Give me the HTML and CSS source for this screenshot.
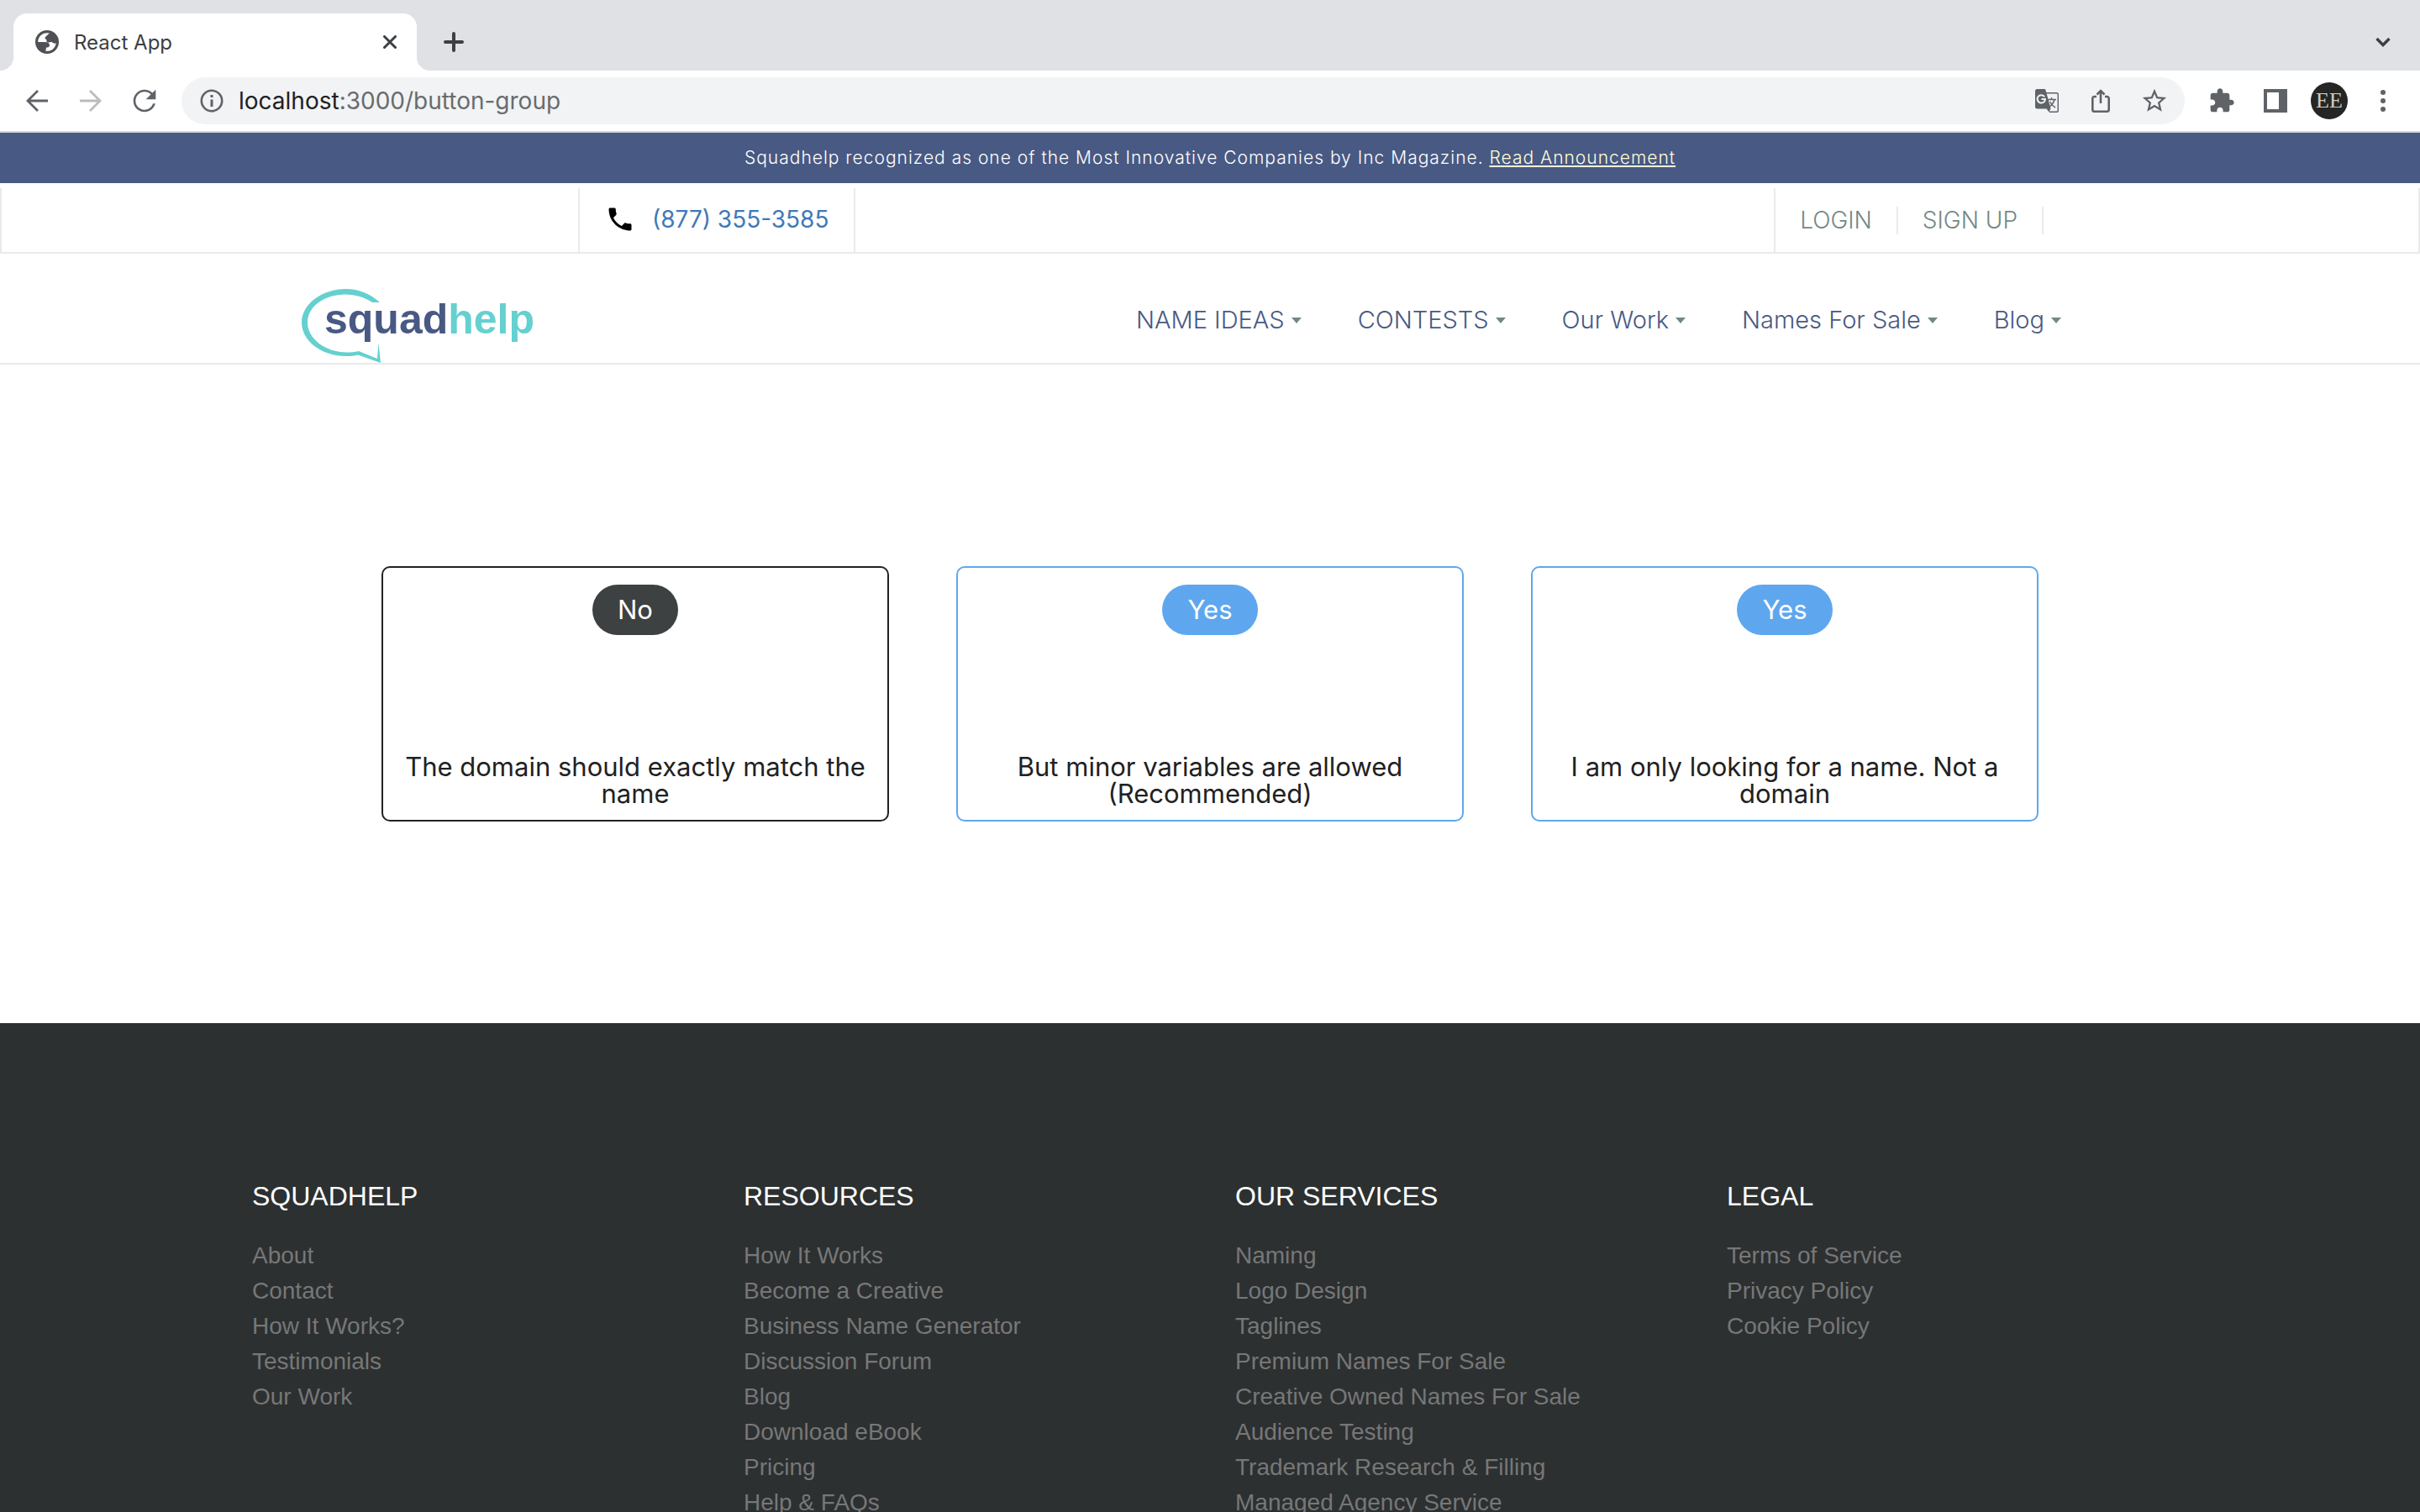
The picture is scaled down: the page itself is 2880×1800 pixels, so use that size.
FILE: index.html
```html
<!DOCTYPE html>
<html lang="en">
<head>
<meta charset="utf-8">
<title>React App</title>
<link rel="stylesheet" href="styles.css">
</head>
<body>
<div class="tab-strip">
  <div class="tab">
    <svg class="tab-icon" viewBox="0 0 28 28" aria-hidden="true"><circle cx="14" cy="14" r="12.4" fill="#fff" stroke="#505156" stroke-width="3.2"/><path fill="#505156" d="M18 2.500l-5 4.500c-2 2-2 3 0 4 1 .8-.5 3 2 3.500 3 0 4-1.500 6 .5 2 1.500 3.500.5 5.500 0C26 8 23 4 18 2.500zM2 14h9c4 0 6 1.500 6 4 0 2-2 2.500-4 2.500-.5 2 0 4-1.500 5.500C6 25 2 20 2 14z"/></svg>
    <span class="tab-title">React App</span>
    <button class="tab-close" aria-label="Close tab"><svg width="16" height="16" viewBox="0 0 16 16"><path d="M1.500 1.500l13 13M14.500 1.500l-13 13" stroke="#3c4043" stroke-width="3" stroke-linecap="round"/></svg></button>
  </div>
  <button class="tool" aria-label="New tab"><svg width="24" height="24" viewBox="0 0 24 24"><path d="M12 2v20M2 12h20" stroke="#3c4043" stroke-width="4" stroke-linecap="round"/></svg></button>
  <button class="tool tool-last" aria-label="Search tabs"><svg width="18" height="12" viewBox="0 0 18 12"><path d="M1.500 2L9 9.500 16.500 2" fill="none" stroke="#3c4043" stroke-width="3.400"/></svg></button>
</div>

<div class="toolbar">
  <button class="tool" aria-label="Back"><svg width="28" height="28" viewBox="0 0 28 28"><path d="M27 14H3M15 2L3 14l12 12" fill="none" stroke="#5f6368" stroke-width="2.800"/></svg></button>
  <button class="tool" aria-label="Forward"><svg width="28" height="28" viewBox="0 0 28 28"><path d="M1 14h24M13 2l12 12-12 12" fill="none" stroke="#babcbe" stroke-width="2.800"/></svg></button>
  <button class="tool" aria-label="Reload"><svg width="40" height="40" viewBox="0 0 24 24"><path fill="#5f6368" d="M17.650 6.350C16.200 4.900 14.210 4 12 4c-4.420 0-7.990 3.580-7.990 8s3.570 8 7.990 8c3.730 0 6.840-2.550 7.730-6h-1.700c-.85 2.600-3.200 4.400-6.030 4.400-3.530 0-6.400-2.870-6.400-6.400s2.870-6.400 6.400-6.400c1.760 0 3.350.7 4.500 1.900L13 11h7V4l-2.350 2.350z"/></svg></button>
  <div class="omnibox">
    <button class="tool" aria-label="Site information"><svg width="28" height="28" viewBox="0 0 28 28"><circle cx="14" cy="14" r="12.200" fill="none" stroke="#5f6368" stroke-width="2.600"/><path d="M14 12.500V21M14 7v3" stroke="#5f6368" stroke-width="3"/></svg></button>
    <div class="url" role="textbox" aria-label="Address" contenteditable="true" spellcheck="false"><span class="url-host">localhost</span>:3000/button-group</div>
    <button class="tool" aria-label="Translate"><svg width="28" height="28" viewBox="0 0 28 28"><path d="M13 4.700h12.500a1.800 1.800 0 011.800 1.800v19a1.800 1.800 0 01-1.800 1.800H17" fill="none" stroke="#5f6368" stroke-width="1.400"/><path d="M2.500 0H11a1.500 1.500 0 011.500 1.200L18.500 23l-2 4.500-3-4H2.500A2.500 2.500 0 010 21V2.500A2.500 2.500 0 012.500 0z" fill="#5f6368"/><path d="M11.200 9.200A4.700 4.700 0 1012 12H7.500" fill="none" stroke="#f1f3f4" stroke-width="2"/><path d="M14.500 12.500H25M19.500 10v2.500M23 12.500c-1 4-3.500 7-6.500 9M17.500 15c1.500 3 4 5.500 6.500 7" fill="none" stroke="#5f6368" stroke-width="1.500"/></svg></button>
    <button class="tool" aria-label="Share"><svg width="28" height="30" viewBox="0 0 28 30"><path d="M9 10H6.500A2.200 2.200 0 004.300 12.200V25.500a2.200 2.200 0 002.200 2.200h15a2.200 2.200 0 002.200-2.200V12.200A2.200 2.200 0 0021.500 10H19M14 18V3M9.500 7.500L14 3l4.500 4.500" fill="none" stroke="#5f6368" stroke-width="2.600"/></svg></button>
    <button class="tool" aria-label="Bookmark"><svg width="34" height="34" viewBox="0 0 24 24"><path fill="#5f6368" d="M22 9.240l-7.190-.62L12 2 9.190 8.630 2 9.240l5.460 4.730L5.820 21 12 17.270 18.180 21l-1.630-7.030L22 9.240zM12 15.400l-3.760 2.270 1-4.280-3.320-2.880 4.380-.38L12 6.100l1.710 4.040 4.380.38-3.320 2.880 1 4.280L12 15.400z"/></svg></button>
  </div>
  <button class="tool" aria-label="Extensions"><svg width="32" height="32" viewBox="0 0 24 24"><path fill="#5f6368" d="M20.500 11H19V7c0-1.100-.9-2-2-2h-4V3.500C13 2.120 11.880 1 10.500 1S8 2.120 8 3.500V5H4c-1.100 0-1.990.9-1.990 2v3.800H3.500c1.490 0 2.700 1.210 2.700 2.700s-1.210 2.700-2.700 2.700H2V20c0 1.100.9 2 2 2h3.800v-1.500c0-1.490 1.210-2.700 2.700-2.700 1.490 0 2.700 1.210 2.700 2.700V22H17c1.100 0 2-.9 2-2v-4h1.500c1.380 0 2.500-1.120 2.500-2.500S21.880 11 20.500 11z"/></svg></button>
  <button class="tool" aria-label="Side panel"><svg width="28" height="28" viewBox="0 0 28 28"><path fill="#5f6368" fill-rule="evenodd" d="M0 0h28v28H0zM4 4v20h14V4z"/></svg></button>
  <button class="tool" aria-label="Profile"><span class="avatar">EE</span></button>
  <button class="tool" aria-label="Menu"><svg width="6" height="26" viewBox="0 0 6 26"><g fill="#5f6368"><circle cx="3" cy="3" r="3"/><circle cx="3" cy="13" r="3"/><circle cx="3" cy="23" r="3"/></g></svg></button>
</div>

<div class="page">
  <p class="announcement">Squadhelp recognized as one of the Most Innovative Companies by Inc Magazine. <a href="#announcement">Read Announcement</a></p>

  <div class="contact-bar">
    <a class="phone" href="tel:8773553585"><svg width="36" height="36" viewBox="0 0 24 24" aria-hidden="true"><path fill="#000" d="M6.620 10.790c1.440 2.830 3.760 5.140 6.590 6.590l2.200-2.200c.27-.27.67-.36 1.020-.24 1.120.37 2.330.57 3.570.57.55 0 1 .45 1 1V20c0 .55-.45 1-1 1-9.390 0-17-7.610-17-17 0-.55.45-1 1-1h3.500c.55 0 1 .45 1 1 0 1.250.2 2.450.57 3.570.11.35.03.74-.25 1.020l-2.200 2.200z"/></svg>(877) 355-3585</a>
    <div class="account"><a href="#login">LOGIN</a><a href="#signup">SIGN UP</a></div>
  </div>

  <header class="header">
    <a class="logo" href="#home" aria-label="Squadhelp">
      <svg class="logo-image" width="280" height="88" viewBox="0 0 280 88"><path fill="#65d0d0" d="M93 16C82 6 68 0 53 0 24 0 0 18 0 40s24 40 53 40c5 0 10-.5 14-1.500L94 88l-2.500-24L90 83l-22-9c-5 1-9 1.500-14 1.500C28 75.500 7 59 7 40S27 6.500 52 6.500c12 0 23 3.500 32 9.500z"/><text class="logo-text" x="27" y="53"><tspan fill="#485983">squad</tspan><tspan fill="#65d0d0">help</tspan></text></svg>
    </a>
    <nav class="nav">
      <a href="#name-ideas">NAME IDEAS</a>
      <a href="#contests">CONTESTS</a>
      <a href="#our-work">Our Work</a>
      <a href="#names">Names For Sale</a>
      <a href="#blog">Blog</a>
    </nav>
  </header>

  <main class="options">
    <button class="option option-dark"><span class="pill">No</span><span class="option-text">The domain should exactly match the name</span></button>
    <button class="option"><span class="pill">Yes</span><span class="option-text">But minor variables are allowed (Recommended)</span></button>
    <button class="option"><span class="pill">Yes</span><span class="option-text">I am only looking for a name. Not a domain</span></button>
  </main>

  <footer class="footer">
    <div class="footer-columns">
      <section>
        <h2>SQUADHELP</h2>
        <ul>
          <li><a href="#about">About</a></li>
          <li><a href="#contact">Contact</a></li>
          <li><a href="#how">How It Works?</a></li>
          <li><a href="#testimonials">Testimonials</a></li>
          <li><a href="#work">Our Work</a></li>
        </ul>
      </section>
      <section>
        <h2>RESOURCES</h2>
        <ul>
          <li><a href="#how">How It Works</a></li>
          <li><a href="#creative">Become a Creative</a></li>
          <li><a href="#generator">Business Name Generator</a></li>
          <li><a href="#forum">Discussion Forum</a></li>
          <li><a href="#blog">Blog</a></li>
          <li><a href="#ebook">Download eBook</a></li>
          <li><a href="#pricing">Pricing</a></li>
          <li><a href="#help">Help &amp; FAQs</a></li>
        </ul>
      </section>
      <section>
        <h2>OUR SERVICES</h2>
        <ul>
          <li><a href="#naming">Naming</a></li>
          <li><a href="#logo">Logo Design</a></li>
          <li><a href="#taglines">Taglines</a></li>
          <li><a href="#premium">Premium Names For Sale</a></li>
          <li><a href="#owned">Creative Owned Names For Sale</a></li>
          <li><a href="#audience">Audience Testing</a></li>
          <li><a href="#trademark">Trademark Research &amp; Filling</a></li>
          <li><a href="#agency">Managed Agency Service</a></li>
        </ul>
      </section>
      <section>
        <h2>LEGAL</h2>
        <ul>
          <li><a href="#terms">Terms of Service</a></li>
          <li><a href="#privacy">Privacy Policy</a></li>
          <li><a href="#cookies">Cookie Policy</a></li>
        </ul>
      </section>
    </div>
  </footer>
</div>
</body>
</html>
```
FILE: styles.css
```css
* {
  box-sizing: border-box;
}

body {
  display: flex;
  flex-direction: column;
  height: 100vh;
  margin: 0;
  overflow: hidden;
  background: #fff;
  color: #212121;
  font-family: Inter, "Liberation Sans", sans-serif;
}

a {
  color: inherit;
  text-decoration: none;
}

button {
  padding: 0;
  border: 0;
  background: none;
  color: inherit;
  font: inherit;
}

svg {
  display: block;
}

/* Browser tab strip */
.tab-strip {
  display: flex;
  flex: none;
  padding: 16px 12px 0 16px;
  background: #dfe1e5;
}

.tab {
  position: relative;
  display: flex;
  align-items: center;
  width: 480px;
  height: 68px;
  padding: 0 24px 0 26px;
  border-radius: 16px 16px 0 0;
  background: #fff;
}

.tab::before,
.tab::after {
  content: "";
  position: absolute;
  bottom: 0;
  width: 16px;
  height: 16px;
}

.tab::before {
  left: -16px;
  background: radial-gradient(circle at 0 0, transparent 16px, #fff 16px);
}

.tab::after {
  right: -16px;
  background: radial-gradient(circle at 100% 0, transparent 16px, #fff 16px);
}

.tab-icon {
  width: 28px;
  height: 28px;
}

.tab-title {
  flex: 1;
  margin-left: 18px;
  color: #3c4043;
  font-size: 24px;
}

.tab + .tool {
  margin-left: 12px;
}

.tool {
  display: flex;
  flex: none;
  align-items: center;
  justify-content: center;
  width: 64px;
}

.tool-last {
  margin-left: auto;
}

/* Browser toolbar */
.toolbar {
  display: flex;
  flex: none;
  padding: 8px 12px;
  border-bottom: 2px solid #d5d7dd;
}

.omnibox {
  display: flex;
  flex: 1;
  height: 56px;
  margin: 0 12px;
  padding: 0 4px;
  border-radius: 28px;
  background: #f1f3f4;
}

.url {
  flex: 1;
  color: #696b6e;
  font-size: 28px;
  line-height: 56px;
}

.url-host {
  color: #202124;
}

.avatar {
  width: 44px;
  height: 44px;
  border-radius: 50%;
  background: #262624;
  color: #cfccc4;
  font: 26px/44px "Liberation Serif", serif;
}

/* Page */
.page {
  display: flex;
  flex: 1;
  flex-direction: column;
  min-height: 0;
  overflow: hidden;
}

.page > * {
  flex: none;
}

.announcement {
  margin: 0;
  background: #485983;
  color: #fff;
  font-size: 21px;
  font-weight: 300;
  letter-spacing: 1px;
  line-height: 60px;
  text-align: center;
}

.announcement a {
  color: #fffdd8;
  text-decoration: underline;
  text-decoration-thickness: 2px;
  text-underline-offset: 2px;
}

.contact-bar {
  display: flex;
  justify-content: space-between;
  height: 78px;
  margin-top: 6px;
  padding: 0 446px 0 686px;
  border: 2px solid #eaeaea;
  border-top: 0;
}

.phone {
  display: flex;
  gap: 20px;
  align-items: center;
  padding: 0 30px 2px;
  border: solid #eaeaea;
  border-width: 0 2px;
  color: #4079b6;
  font-size: 28px;
}

.account {
  display: flex;
  align-items: center;
  border-left: 2px solid #eaeaea;
  color: #748886;
  font-size: 28px;
  font-weight: 300;
  line-height: 33px;
}

.account a {
  padding: 0 29px;
  border-right: 2px solid #eaeaea;
}

.header {
  display: flex;
  align-items: flex-start;
  justify-content: space-between;
  padding: 42px 427px 0 359px;
  border-bottom: 2px solid #eaeaea;
}

.logo-image {
  overflow: visible;
}

.logo-text {
  font: bold 50px "Liberation Sans", sans-serif;
}

.nav {
  display: flex;
  gap: 67px;
  color: #485983;
  font-size: 29px;
  font-weight: 300;
  line-height: 74px;
}

.nav a {
  display: flex;
  gap: 8px;
  align-items: center;
}

.nav a::after {
  content: "";
  border: 6px solid transparent;
  border-top: 7px solid #748886;
  border-bottom: 0;
}

.options {
  display: grid;
  grid-template-columns: repeat(3, 1fr);
  gap: 80px;
  width: 100%;
  max-width: 1972px;
  margin: 0 auto;
  padding: 240px 0;
}

.option {
  display: flex;
  flex-direction: column;
  gap: 141px;
  align-items: center;
  padding: 20px 20px 15px;
  border: 2px solid #5ea7ee;
  border-radius: 10px;
  font-size: 31px;
  line-height: 32px;
}

.option-dark {
  border-color: #212121;
}

.pill {
  padding: 0 30px;
  border-radius: 30px;
  background: #5ea7ee;
  color: #fff;
  line-height: 60px;
}

.option-dark .pill {
  background: #3d4142;
}

.footer {
  padding: 188px 30px 100px;
  background: #2c3031;
  color: #777;
  font-family: "Liberation Sans", Arial, sans-serif;
}

.footer-columns {
  display: grid;
  grid-template-columns: repeat(4, 1fr);
  max-width: 2340px;
  margin: 0 auto;
}

.footer section {
  padding: 0 30px;
}

.footer h2 {
  margin: 0 0 32px;
  color: #fff;
  font-size: 32px;
  font-weight: 400;
  line-height: 36px;
}

.footer ul {
  margin: 0;
  padding: 0;
  list-style: none;
}

.footer li {
  font-size: 28px;
  line-height: 42px;
}
```
